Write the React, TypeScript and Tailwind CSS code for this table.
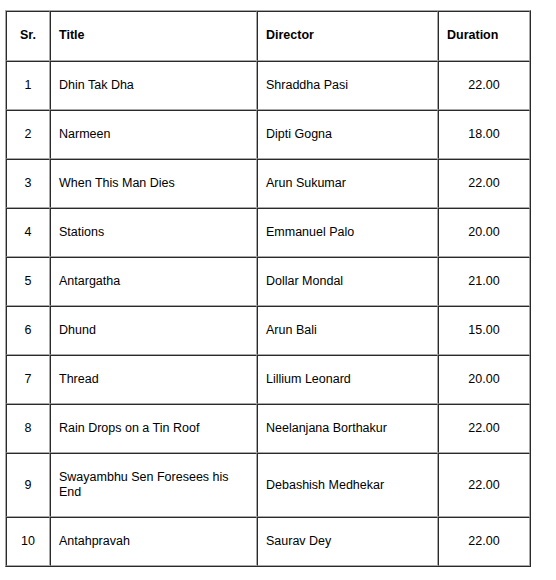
import React from "react";

const rows: [string, string, string, string][] = [
  ["1", "Dhin Tak Dha", "Shraddha Pasi", "22.00"],
  ["2", "Narmeen", "Dipti Gogna", "18.00"],
  ["3", "When This Man Dies", "Arun Sukumar", "22.00"],
  ["4", "Stations", "Emmanuel Palo", "20.00"],
  ["5", "Antargatha", "Dollar Mondal", "21.00"],
  ["6", "Dhund", "Arun Bali", "15.00"],
  ["7", "Thread", "Lillium Leonard", "20.00"],
  ["8", "Rain Drops on a Tin Roof", "Neelanjana Borthakur", "22.00"],
  ["9", "Swayambhu Sen Foresees his End", "Debashish Medhekar", "22.00"],
  ["10", "Antahpravah", "Saurav Dey", "22.00"],
];

const cell =
  "border-t border-l border-t-[#2a2a2a] border-l-[#2a2a2a] border-b border-r border-b-[#a8a8a8] border-r-[#a8a8a8] px-[8px] py-[16px] leading-[15px] align-middle";

export default function App() {
  return (
    <div className="bg-white w-[556px] h-[580px] pt-[10px] pl-[5px] text-black" style={{ fontFamily: '"Liberation Sans", Arial, sans-serif' }}>
      <table className="table-fixed border-separate border-spacing-0 w-[526px] text-[12.5px] border-t border-l border-t-[#a8a8a8] border-l-[#a8a8a8] border-b border-r border-b-[#2a2a2a] border-r-[#2a2a2a]">
        <colgroup>
          <col className="w-[44px]" />
          <col className="w-[207px]" />
          <col className="w-[181px]" />
          <col className="w-[92px]" />
        </colgroup>
        <thead>
          <tr>
            <th className={`${cell} pb-[17px] text-center font-bold`}>Sr.</th>
            <th className={`${cell} pb-[17px] text-left font-bold`}>Title</th>
            <th className={`${cell} pb-[17px] text-left font-bold`}>Director</th>
            <th className={`${cell} pb-[17px] text-left font-bold`}>Duration</th>
          </tr>
        </thead>
        <tbody>
          {rows.map(([n, t, d, m]) => (
            <tr key={n}>
              <td className={`${cell} text-center`}>{n}</td>
              <td className={`${cell} text-left`}>{t}</td>
              <td className={`${cell} text-left`}>{d}</td>
              <td className={`${cell} text-center`}>{m}</td>
            </tr>
          ))}
        </tbody>
      </table>
    </div>
  );
}
